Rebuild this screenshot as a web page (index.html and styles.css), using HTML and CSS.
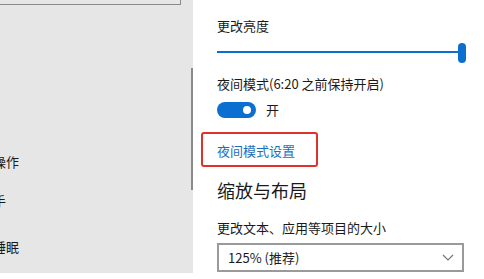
FILE: index.html
```html
<!DOCTYPE html>
<html lang="zh-CN">
<head>
<meta charset="utf-8">
<link rel="stylesheet" href="styles.css">
</head>
<body>
<div class="page">
  <aside class="nav">
    <div class="nav-top"></div>
    <ul class="nav-list">
      <li class="item-1">通知和操作</li>
      <li class="item-2">专注助手</li>
      <li class="item-3">电源和睡眠</li>
    </ul>
    <div class="scrollbar"></div>
  </aside>
  <main class="content">
    <div class="label title1">更改亮度</div>
    <div class="slider"><div class="track"></div><div class="thumb"></div></div>
    <div class="label night">夜间模式(6:20 之前保持开启)</div>
    <div class="toggle-row">
      <span class="toggle"><span class="knob"></span></span>
      <span class="toggle-text">开</span>
    </div>
    <div class="link-wrap"><a class="link">夜间模式设置</a></div>
    <h2 class="heading">缩放与布局</h2>
    <div class="label size-label">更改文本、应用等项目的大小</div>
    <div class="select">
      <span class="select-text">125% (推荐)</span>
      <svg class="chev" width="12" height="7" viewBox="0 0 12 7"><path d="M1 1 L6 6 L11 1" fill="none" stroke="#777" stroke-width="1.2"/></svg>
    </div>
  </main>
</div>
</body>
</html>
```

FILE: styles.css
```css
html, body {
  margin: 0;
  padding: 0;
  background: #fff;
}
body {
  font-family: "Noto Sans CJK SC", "Noto Sans", sans-serif;
  color: #1a1a1a;
  width: 484px;
  height: 279px;
  overflow: hidden;
}
.page {
  display: flex;
  align-items: flex-start;
}
.nav {
  position: relative;
  width: 193px;
  height: 273px;
  background: #e6e6e6;
  flex: none;
  overflow: hidden;
}
.nav-top {
  width: 180px;
  height: 4px;
  border-right: 1px solid #8a8a8a;
  border-bottom: 1px solid #8a8a8a;
}
.nav-list {
  list-style: none;
  margin: 0 0 0 -46px;
  padding: 147px 0 0 0;
  font-size: 13px;
  line-height: 20px;
  white-space: nowrap;
}
.item-2 { margin-top: 19px; }
.item-3 { margin-top: 26px; }
.scrollbar {
  position: absolute;
  left: 191px;
  top: 68px;
  width: 2px;
  height: 122px;
  background: #8a8a8a;
}
.content {
  padding: 16px 0 0 24px;
  flex: none;
  width: 260px;
}
.label {
  font-size: 13px;
  line-height: 20px;
  white-space: nowrap;
}
.slider {
  position: relative;
  width: 249px;
  height: 20px;
  margin-top: 7px;
}
.track {
  position: absolute;
  left: 0;
  right: 4px;
  top: 8px;
  height: 2px;
  background: #0a6fd1;
}
.thumb {
  position: absolute;
  right: 0;
  top: 0;
  width: 8px;
  height: 20px;
  border-radius: 4px;
  background: #0a6fd1;
}
.night { margin-top: 11px; }
.toggle-row {
  display: flex;
  align-items: center;
  margin-top: 8px;
  height: 16px;
}
.toggle {
  position: relative;
  display: block;
  width: 39px;
  height: 16px;
  border-radius: 8px;
  background: #0a6fd1;
}
.knob {
  position: absolute;
  right: 5px;
  top: 4px;
  width: 8px;
  height: 8px;
  border-radius: 50%;
  background: #fff;
}
.toggle-text {
  margin-left: 10px;
  font-size: 13px;
  line-height: 16px;
}
.link-wrap {
  position: relative;
  margin-top: 19px;
  height: 20px;
}
.link-wrap::before {
  content: "";
  position: absolute;
  left: -16px;
  top: -5px;
  width: 113px;
  height: 31px;
  border: 2px solid #e0322c;
  border-radius: 3px;
}
.link {
  font-size: 13px;
  line-height: 20px;
  color: #1a6fc2;
}
.heading {
  margin: 21px 0 0 0;
  font-size: 18px;
  line-height: 24px;
  font-weight: normal;
}
.size-label { margin-top: 16px; }
.select {
  box-sizing: border-box;
  margin-top: 5px;
  width: 247px;
  height: 29px;
  border: 2px solid #9a9a9a;
  display: flex;
  align-items: center;
  justify-content: space-between;
  padding: 0 8px 0 9px;
}
.select-text {
  font-size: 13px;
  line-height: 20px;
}
.chev { display: block; }
```
